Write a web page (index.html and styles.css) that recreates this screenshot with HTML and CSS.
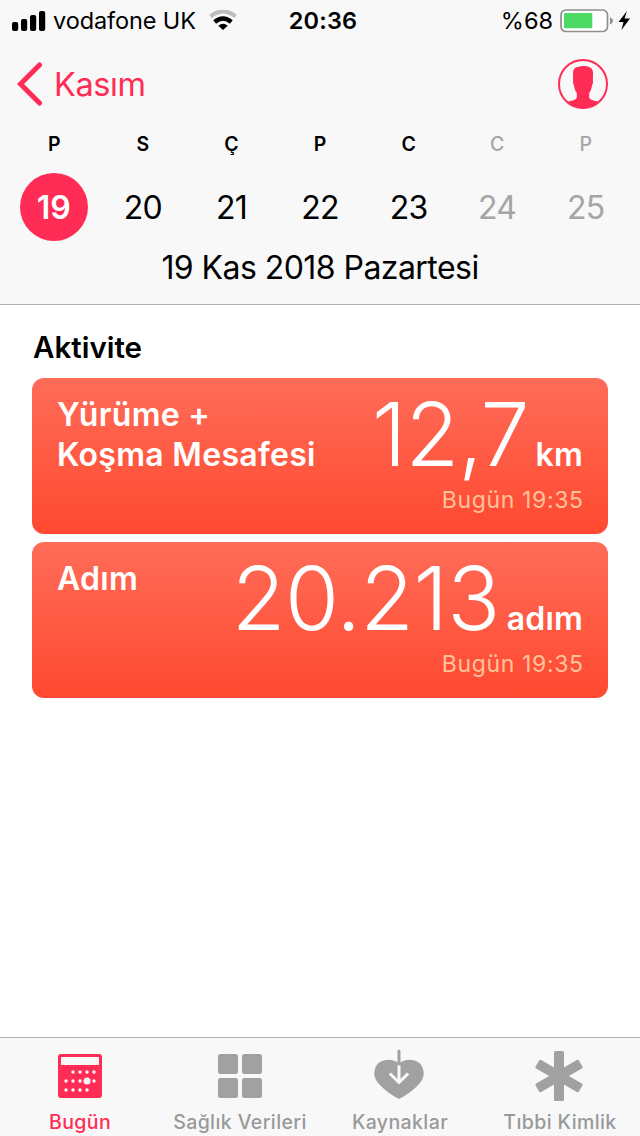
FILE: index.html
```html
<!DOCTYPE html>
<html lang="tr">
<head>
<meta charset="utf-8">
<title>Sağlık</title>
<link rel="stylesheet" href="styles.css">
</head>
<body>
<div class="screen">
  <header class="top">
    <div class="status">
      <div class="status-left">
        <svg class="signal" width="34" height="20" viewBox="0 0 34 20"><rect x="0" y="11" width="6.2" height="9" rx="2"/><rect x="9" y="8" width="6.2" height="12" rx="2"/><rect x="18" y="4" width="6.2" height="16" rx="2"/><rect x="27" y="0" width="6.2" height="20" rx="2"/></svg>
        <span class="carrier">vodafone UK</span>
        <svg class="wifi" width="28" height="20" viewBox="0 0 28 20"><path d="M1.400 6.400Q14-3.600 26.600 6.400" fill="none" stroke="#bdbdbd" stroke-width="4"/><path d="M5.700 12Q14 5 22.300 12" fill="none" stroke="#000" stroke-width="4.400"/><path d="M9.300 15.700Q14 12 18.700 15.700L14 20Z"/></svg>
      </div>
      <span class="clock">20:36</span>
      <div class="status-right">
        <span class="percent">%68</span>
        <svg width="72" height="26" viewBox="0 0 72 26"><rect x="2" y="2" width="46.500" height="21.500" rx="5" fill="#fff" stroke="#8f8f8f" stroke-width="1.700"/><rect x="5" y="5" width="28.300" height="15.300" rx="1" fill="#4cd964"/><path d="M51 9.200Q54 10.500 54 12.800T51 16.500Z" fill="#8f8f8f"/><path d="M68 3L59.500 14H64.500L62.500 22L71 10.500H65.500Z"/></svg>
      </div>
    </div>
    <nav class="nav">
      <a class="back"><svg width="26" height="44" viewBox="0 0 26 44"><path d="M22.500 3L3.500 22L22.500 41" fill="none" stroke="#ff2d55" stroke-width="5" stroke-linecap="round" stroke-linejoin="miter"/></svg><span>Kasım</span></a>
      <svg width="50" height="50" viewBox="0 0 50 50"><circle cx="25" cy="25" r="24" fill="none" stroke="#ff2d55" stroke-width="2"/><path d="M25 7C31 6.800 35 9 35 13.500L34.900 20.500Q35.400 24 34.200 26Q33.500 31 31.200 34V38.500Q31.400 41 40 42.500Q34 49.500 25 49.500T10 42.500Q18.600 41 18.800 38.500V34Q16.500 31 15.800 26Q14.600 24 15.100 20.500L15 13.500Q15.500 8 20 8Q22 7 25 7Z" fill="#ff2d55"/></svg>
    </nav>
    <div class="week names"><span>P</span><span>S</span><span>Ç</span><span>P</span><span>C</span><span class="off">C</span><span class="off">P</span></div>
    <div class="week days"><span class="selected">19</span><span>20</span><span>21</span><span>22</span><span>23</span><span class="off">24</span><span class="off">25</span></div>
    <div class="date"><span>19 Kas 2018 Pazartesi</span></div>
  </header>
  <main class="content">
    <h1>Aktivite</h1>
    <section class="card">
      <h2>Yürüme +<br>Koşma Mesafesi</h2>
      <div class="reading"><div class="value"><span class="num">12,7</span><span class="unit">km</span></div><div class="time">Bugün 19:35</div></div>
    </section>
    <section class="card">
      <h2>Adım</h2>
      <div class="reading"><div class="value"><span class="num wide">20.213</span><span class="unit">adım</span></div><div class="time">Bugün 19:35</div></div>
    </section>
  </main>
  <footer class="tabs">
    <a class="tab active"><svg width="52" height="56" viewBox="0 0 52 56"><rect x="4" y="8" width="44" height="44" rx="3" fill="#ff2d55"/><rect x="7" y="11" width="38" height="8" fill="#f8f8f8"/><g fill="#f8f8f8"><circle cx="19" cy="26" r="1.700"/><circle cx="26" cy="26" r="1.700"/><circle cx="33" cy="26" r="1.700"/><circle cx="40" cy="26" r="1.700"/><circle cx="12" cy="35" r="1.700"/><circle cx="19" cy="35" r="1.700"/><circle cx="26" cy="35" r="1.700"/><circle cx="33" cy="35" r="3.500"/><circle cx="40" cy="35" r="1.700"/><circle cx="12" cy="44" r="1.700"/><circle cx="19" cy="44" r="1.700"/><circle cx="26" cy="44" r="1.700"/><circle cx="33" cy="44" r="1.700"/></g></svg><span>Bugün</span></a>
    <a class="tab"><svg width="52" height="56" viewBox="0 0 52 56"><g fill="#a1a1a1"><rect x="4" y="8" width="20" height="20" rx="2.500"/><rect x="28" y="8" width="20" height="20" rx="2.500"/><rect x="4" y="32" width="20" height="20" rx="2.500"/><rect x="28" y="32" width="20" height="20" rx="2.500"/></g></svg><span>Sağlık Verileri</span></a>
    <a class="tab"><svg width="52" height="56" viewBox="1 0 52 56"><path d="M26 17.500C20 12 10 13 5 17.500C-.5 24 .5 32 5.500 37.500Q14 47 26 53Q38 47 46.500 37.500C51.500 32 52.500 24 47 17.500C42 13 32 12 26 17.500Z" fill="#a1a1a1"/><path d="M26 19V36M16.800 27.500L26 36.500L35.200 27.500" fill="none" stroke="#f8f8f8" stroke-width="3"/><path d="M26 5V18" stroke="#a1a1a1" stroke-width="3" stroke-linecap="round"/></svg><span>Kaynaklar</span></a>
    <a class="tab"><svg width="52" height="56" viewBox="0 0 52 56"><g fill="#a1a1a1"><rect x="20" y="5" width="10" height="50" rx="1.500"/><rect x="20" y="5" width="10" height="50" rx="1.500" transform="rotate(60 25 30)"/><rect x="20" y="5" width="10" height="50" rx="1.500" transform="rotate(-60 25 30)"/></g></svg><span>Tıbbi Kimlik</span></a>
  </footer>
</div>
</body>
</html>
```
FILE: styles.css
```css
* { box-sizing: border-box; }
body { margin: 0; background: #fff; color: #000; font-family: Inter, "Noto Sans", sans-serif; }
svg { display: block; flex: none; }
span, h1, h2 { white-space: nowrap; }
.screen { width: 640px; height: 1136px; display: flex; flex-direction: column; overflow: hidden; }
.top { height: 305px; flex: none; background: #f8f8f8; border-bottom: 1px solid #b2b2b2; }
.status { height: 42px; display: grid; grid-template-columns: 1fr auto 1fr; align-items: center; padding: 0 9px 0 12px; line-height: 42px; font-size: 23.5px; }
.status-left { display: flex; align-items: center; }
.signal { margin-top: -1px; }
.wifi { margin-top: -2px; }
.carrier { margin-left: 7px; width: 156px; letter-spacing: -0.1px; }
.clock { font-weight: 600; padding-left: 3px; letter-spacing: 0.2px; }
.status-right { display: flex; align-items: center; justify-content: flex-end; gap: 6px; }
.nav { height: 84px; display: flex; align-items: center; justify-content: space-between; padding: 0 32px 0 17px; }
.back { display: flex; align-items: center; gap: 11px; color: #ff2d55; font-size: 32.5px; line-height: 44px; letter-spacing: -0.4px; }
.back span { padding-top: 2px; }
.week { display: grid; grid-template-columns: repeat(7, 1fr); padding: 0 10px; text-align: center; justify-items: center; }
.names { height: 36px; line-height: 37px; font-size: 19.5px; font-weight: 600; }
.days { margin-top: 11px; height: 68px; line-height: 69px; font-size: 32px; letter-spacing: -0.8px; }
.off { color: #a5a5a5; }
.names .off { font-weight: 500; }
.selected { width: 68px; height: 68px; border-radius: 50%; background: #ff2d55; color: #fff; font-weight: 580; padding-right: 1px; letter-spacing: 0; }
.date { height: 52px; line-height: 54px; font-size: 32px; text-align: center; letter-spacing: -0.55px; }
.content { flex: 1; padding: 22px 32px 0; display: flex; flex-direction: column; }
h1 { margin: 0 0 11px; height: 40px; line-height: 40px; padding-left: 1px; font-size: 29.5px; font-weight: 580; letter-spacing: 0; }
.card { height: 156px; margin-bottom: 8px; border-radius: 12px; padding: 0 25px; display: flex; justify-content: space-between; color: #fff; background: linear-gradient(#ff6c58, #ff4930); }
h2 { margin: 0; padding-top: 17px; font-size: 32px; line-height: 40px; font-weight: 590; letter-spacing: 0.3px; }
.reading { display: flex; flex-direction: column; align-items: flex-end; }
.value { height: 112px; line-height: 112px; display: flex; align-items: baseline; }
.num { font-size: 87.5px; font-weight: 300; letter-spacing: -1px; }
.wide { letter-spacing: -0.6px; }
.unit { font-size: 32px; font-weight: 590; margin-left: 7px; letter-spacing: 0.2px; }
.time { line-height: 20px; font-size: 23px; color: #ffc29b; letter-spacing: 0.65px; margin-right: -0.7px; }
.tabs { height: 99px; border-top: 1px solid #b2b2b2; background: #f8f8f8; display: grid; grid-template-columns: repeat(4, 1fr); justify-items: center; }
.tab { display: flex; flex-direction: column; align-items: center; padding-top: 8px; color: #999; font-size: 19.5px; font-weight: 500; line-height: 40px; letter-spacing: 0.4px; }
.active { color: #ff2d55; }
```
